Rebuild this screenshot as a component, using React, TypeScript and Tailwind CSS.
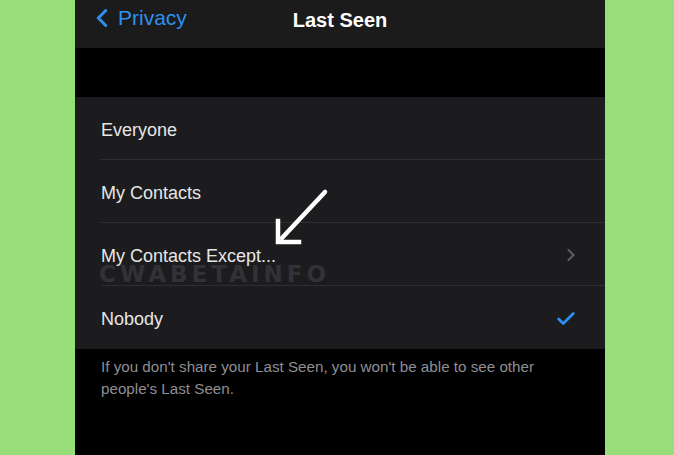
import { Check, ChevronLeft, ChevronRight } from "lucide-react";

const OPTIONS = ["Everyone", "My Contacts", "My Contacts Except...", "Nobody"];

const Row = ({ label, last }: { label: string; last: boolean }) => (
  <div className="relative h-[63px] flex items-center pl-[26px] pr-[28px]">
    <span className="text-[18px] text-[#e6e6e6] pt-[3px] flex-1">{label}</span>
    {label === "My Contacts Except..." && (
      <ChevronRight className="h-[20px] w-[20px] text-[#5b5b60] -mr-[4px]" strokeWidth={2.5} />
    )}
    {label === "Nobody" && <Check className="h-[22px] w-[22px] text-[#2f8ff0] mt-[2px]" strokeWidth={3} />}
    {!last && <div className="absolute bottom-0 left-[26px] right-0 h-px bg-[#2e2e33]" />}
  </div>
);

export default function App() {
  return (
    <div
      className="h-[455px] w-full overflow-hidden bg-[#97dd78] flex"
      style={{ fontFamily: '"Liberation Sans", Arial, sans-serif' }}
    >
      <div className="relative ml-[75px] w-[530px] h-full bg-black flex flex-col">
        {/* Nav bar */}
        <div className="relative h-[48px] bg-[#1b1b1b] flex items-start pt-[2px]">
          <div className="flex items-center pl-[12px] text-[#2f8ff0]">
            <ChevronLeft className="h-[30px] w-[30px]" strokeWidth={2.4} />
            <span className="text-[21px] ml-[1px]">Privacy</span>
          </div>
          <div className="absolute inset-x-0 top-[5px] text-center text-[20px] font-semibold text-white">
            Last Seen
          </div>
        </div>

        <div className="h-[49px] bg-black" />

        {/* Options */}
        <div className="bg-[#1c1c1e]">
          {OPTIONS.map((o, i) => (
            <Row key={o} label={o} last={i === OPTIONS.length - 1} />
          ))}
        </div>

        <p className="pl-[26px] pr-[40px] pt-[7px] text-[15.2px] leading-[22px] text-[#8e8e93]">
          If you don't share your Last Seen, you won't be able to see other people's Last Seen.
        </p>

        {/* Watermark */}
        <div
          className="absolute left-[24px] top-[257px] text-[23px] font-bold tracking-[4px] text-[#323236] pointer-events-none select-none"
          style={{ fontFamily: '"DejaVu Sans", sans-serif' }}
        >
          CWABETAINFO
        </div>

        {/* Arrow annotation */}
        <svg className="absolute left-[195px] top-[185px]" width="70" height="65" viewBox="0 0 70 65">
          <g stroke="#ffffff" strokeWidth="4.5" strokeLinecap="round" fill="none">
            <line x1="55" y1="7" x2="12" y2="53" />
            <polyline points="8,36 8,57 29,57" strokeLinecap="square" />
          </g>
        </svg>
      </div>
    </div>
  );
}
